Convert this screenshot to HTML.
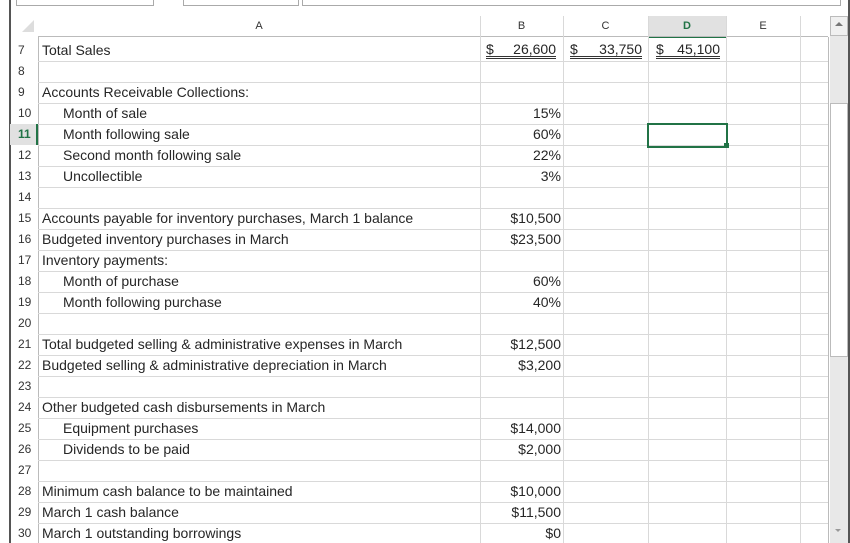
<!DOCTYPE html>
<html style="overflow:hidden;width:850px;height:543px"><head><meta charset="utf-8"><style>
body{margin:0;width:850px;height:543px;overflow:hidden;background:#fff;position:relative;font-family:"Liberation Sans",Arial,sans-serif;font-size:14px;color:#262626}
.a{position:absolute}
.hl{position:absolute;left:38px;width:790px;height:1px;background:#d9d9d9}
.vl{position:absolute;top:16px;width:1px;height:527px;background:#d9d9d9}
.r{position:absolute;left:10px;width:28px;height:21px;line-height:21px;font-size:12px;color:#333;padding-left:8px;box-sizing:border-box}
.t{position:absolute;left:42px;height:21px;line-height:21px;white-space:nowrap}
.i{left:63px}
.v{position:absolute;left:480px;width:81px;height:21px;line-height:21px;text-align:right}
.h{position:absolute;top:16px;height:21px;line-height:21px;text-align:center;font-size:11px;color:#333}
.u{position:absolute;top:41px;height:15px;line-height:17px;border-bottom:3px double #333;display:flex;justify-content:space-between}
</style></head><body>
<div class="a" style="left:16px;top:-2px;width:136px;height:6px;border:1px solid #aaa"></div>
<div class="a" style="left:183px;top:-2px;width:114px;height:6px;border:1px solid #aaa"></div>
<div class="a" style="left:302px;top:-2px;width:537px;height:6px;border:1px solid #aaa"></div>
<div class="a" style="left:9px;top:0;width:2px;height:543px;background:#555"></div>
<div class="a" style="left:22px;top:20px;width:0;height:0;border-left:12px solid transparent;border-bottom:12px solid #ddd"></div>
<div class="a" style="left:648px;top:16px;width:78px;height:20px;background:#e1e1e1;border-bottom:2px solid #217346"></div>
<div class="h" style="left:38px;width:442px">A</div>
<div class="h" style="left:480px;width:83px">B</div>
<div class="h" style="left:563px;width:85px">C</div>
<div class="h" style="left:648px;width:78px;color:#217346;font-weight:bold">D</div>
<div class="h" style="left:726px;width:74px">E</div>
<div class="a" style="left:38px;top:36px;width:790px;height:1px;background:#bbb"></div>
<div class="vl" style="left:38px;background:#bbb;top:37px;height:506px"></div>
<div class="vl" style="left:480px"></div>
<div class="vl" style="left:563px"></div>
<div class="vl" style="left:648px"></div>
<div class="vl" style="left:726px"></div>
<div class="vl" style="left:800px"></div>
<div class="vl" style="left:828px;background:#bbb;top:37px;height:506px"></div>
<div class="hl" style="top:61px"></div><div class="hl" style="top:82px"></div><div class="hl" style="top:103px"></div><div class="hl" style="top:124px"></div><div class="hl" style="top:145px"></div><div class="hl" style="top:166px"></div><div class="hl" style="top:187px"></div><div class="hl" style="top:208px"></div><div class="hl" style="top:229px"></div><div class="hl" style="top:250px"></div><div class="hl" style="top:271px"></div><div class="hl" style="top:292px"></div><div class="hl" style="top:313px"></div><div class="hl" style="top:334px"></div><div class="hl" style="top:355px"></div><div class="hl" style="top:376px"></div><div class="hl" style="top:397px"></div><div class="hl" style="top:418px"></div><div class="hl" style="top:439px"></div><div class="hl" style="top:460px"></div><div class="hl" style="top:481px"></div><div class="hl" style="top:502px"></div><div class="hl" style="top:523px"></div>
<div class="r" style="top:40px">7</div><div class="t" style="top:40px">Total Sales</div>
<div class="u" style="left:486px;width:70px"><span>$</span><span>26,600</span></div>
<div class="u" style="left:570px;width:72px"><span>$</span><span>33,750</span></div>
<div class="u" style="left:656px;width:64px"><span>$</span><span>45,100</span></div>
<div class="r" style="top:61px">8</div>
<div class="r" style="top:82px">9</div><div class="t" style="top:82px">Accounts Receivable Collections:</div>
<div class="r" style="top:103px">10</div><div class="t i" style="top:103px">Month of sale</div><div class="v" style="top:103px">15%</div>
<div class="r" style="top:124px;color:#217346;font-weight:bold;border-right:2px solid #217346;background:#e1e1e1">11</div><div class="t i" style="top:124px">Month following sale</div><div class="v" style="top:124px">60%</div>
<div class="r" style="top:145px">12</div><div class="t i" style="top:145px">Second month following sale</div><div class="v" style="top:145px">22%</div>
<div class="r" style="top:166px">13</div><div class="t i" style="top:166px">Uncollectible</div><div class="v" style="top:166px">3%</div>
<div class="r" style="top:187px">14</div>
<div class="r" style="top:208px">15</div><div class="t" style="top:208px">Accounts payable for inventory purchases, March 1 balance</div><div class="v" style="top:208px">$10,500</div>
<div class="r" style="top:229px">16</div><div class="t" style="top:229px">Budgeted inventory purchases in March</div><div class="v" style="top:229px">$23,500</div>
<div class="r" style="top:250px">17</div><div class="t" style="top:250px">Inventory payments:</div>
<div class="r" style="top:271px">18</div><div class="t i" style="top:271px">Month of purchase</div><div class="v" style="top:271px">60%</div>
<div class="r" style="top:292px">19</div><div class="t i" style="top:292px">Month following purchase</div><div class="v" style="top:292px">40%</div>
<div class="r" style="top:313px">20</div>
<div class="r" style="top:334px">21</div><div class="t" style="top:334px">Total budgeted selling &amp; administrative expenses in March</div><div class="v" style="top:334px">$12,500</div>
<div class="r" style="top:355px">22</div><div class="t" style="top:355px">Budgeted selling &amp; administrative depreciation in March</div><div class="v" style="top:355px">$3,200</div>
<div class="r" style="top:376px">23</div>
<div class="r" style="top:397px">24</div><div class="t" style="top:397px">Other budgeted cash disbursements in March</div>
<div class="r" style="top:418px">25</div><div class="t i" style="top:418px">Equipment purchases</div><div class="v" style="top:418px">$14,000</div>
<div class="r" style="top:439px">26</div><div class="t i" style="top:439px">Dividends to be paid</div><div class="v" style="top:439px">$2,000</div>
<div class="r" style="top:460px">27</div>
<div class="r" style="top:481px">28</div><div class="t" style="top:481px">Minimum cash balance to be maintained</div><div class="v" style="top:481px">$10,000</div>
<div class="r" style="top:502px">29</div><div class="t" style="top:502px">March 1 cash balance</div><div class="v" style="top:502px">$11,500</div>
<div class="r" style="top:523px">30</div><div class="t" style="top:523px">March 1 outstanding borrowings</div><div class="v" style="top:523px">$0</div>
<div class="a" style="left:647px;top:123px;width:77px;height:21px;border:2px solid #217346"></div>
<div class="a" style="left:724px;top:143px;width:5px;height:5px;background:#217346"></div>
<div class="a" style="left:830px;top:16px;width:18px;height:527px;background:#e8e8e8"></div>
<div class="a" style="left:830px;top:16px;width:16px;height:18px;border:1px solid #bbb;background:#f0f0f0"></div>
<div class="a" style="left:835px;top:22px;width:0;height:0;border-left:4px solid transparent;border-right:4px solid transparent;border-bottom:4px solid #777"></div>
<div class="a" style="left:830px;top:103px;width:16px;height:252px;border:1px solid #bbb;background:#fff"></div>
<div class="a" style="left:835px;top:529px;width:0;height:0;border-left:3px solid transparent;border-right:3px solid transparent;border-top:3px solid #999"></div>
<div class="a" style="left:848px;top:0;width:2px;height:543px;background:#555"></div>
</body></html>
